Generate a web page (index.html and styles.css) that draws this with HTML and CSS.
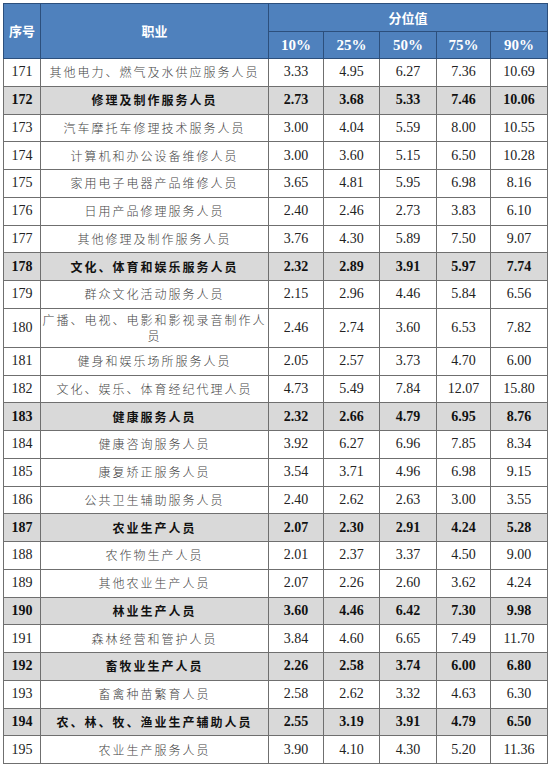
FILE: index.html
```html
<!DOCTYPE html>
<html lang="zh">
<head>
<meta charset="utf-8">
<link rel="stylesheet" href="styles.css">
</head>
<body>
<table class="tbl">
<colgroup>
<col class="c-no"><col class="c-job"><col class="c-a"><col class="c-b"><col class="c-c"><col class="c-d"><col class="c-e">
</colgroup>
<thead>
<tr class="h1"><th rowspan="2" class="hz">序号</th><th rowspan="2" class="hz">职业</th><th colspan="5" class="hz">分位值</th></tr>
<tr class="h2"><th>10%</th><th>25%</th><th>50%</th><th class="dk">75%</th><th>90%</th></tr>
</thead>
<tbody>
<tr><td>171</td><td class="job">其他电力、燃气及水供应服务人员</td><td>3.33</td><td>4.95</td><td>6.27</td><td class="dk">7.36</td><td>10.69</td></tr>
<tr class="cat"><td>172</td><td class="job">修理及制作服务人员</td><td>2.73</td><td>3.68</td><td>5.33</td><td class="dk">7.46</td><td>10.06</td></tr>
<tr><td>173</td><td class="job">汽车摩托车修理技术服务人员</td><td>3.00</td><td>4.04</td><td>5.59</td><td class="dk">8.00</td><td>10.55</td></tr>
<tr><td>174</td><td class="job">计算机和办公设备维修人员</td><td>3.00</td><td>3.60</td><td>5.15</td><td class="dk">6.50</td><td>10.28</td></tr>
<tr><td>175</td><td class="job">家用电子电器产品维修人员</td><td>3.65</td><td>4.81</td><td>5.95</td><td class="dk">6.98</td><td>8.16</td></tr>
<tr><td>176</td><td class="job">日用产品修理服务人员</td><td>2.40</td><td>2.46</td><td>2.73</td><td class="dk">3.83</td><td>6.10</td></tr>
<tr><td>177</td><td class="job">其他修理及制作服务人员</td><td>3.76</td><td>4.30</td><td>5.89</td><td class="dk">7.50</td><td>9.07</td></tr>
<tr class="cat"><td>178</td><td class="job">文化、体育和娱乐服务人员</td><td>2.32</td><td>2.89</td><td>3.91</td><td class="dk">5.97</td><td>7.74</td></tr>
<tr><td>179</td><td class="job">群众文化活动服务人员</td><td>2.15</td><td>2.96</td><td>4.46</td><td class="dk">5.84</td><td>6.56</td></tr>
<tr class="tall"><td>180</td><td class="job">广播、电视、电影和影视录音制作人<br>员</td><td>2.46</td><td>2.74</td><td>3.60</td><td class="dk">6.53</td><td>7.82</td></tr>
<tr><td>181</td><td class="job">健身和娱乐场所服务人员</td><td>2.05</td><td>2.57</td><td>3.73</td><td class="dk">4.70</td><td>6.00</td></tr>
<tr><td>182</td><td class="job">文化、娱乐、体育经纪代理人员</td><td>4.73</td><td>5.49</td><td>7.84</td><td class="dk">12.07</td><td>15.80</td></tr>
<tr class="cat"><td>183</td><td class="job">健康服务人员</td><td>2.32</td><td>2.66</td><td>4.79</td><td class="dk">6.95</td><td>8.76</td></tr>
<tr><td>184</td><td class="job">健康咨询服务人员</td><td>3.92</td><td>6.27</td><td>6.96</td><td class="dk">7.85</td><td>8.34</td></tr>
<tr><td>185</td><td class="job">康复矫正服务人员</td><td>3.54</td><td>3.71</td><td>4.96</td><td class="dk">6.98</td><td>9.15</td></tr>
<tr><td>186</td><td class="job">公共卫生辅助服务人员</td><td>2.40</td><td>2.62</td><td>2.63</td><td class="dk">3.00</td><td>3.55</td></tr>
<tr class="cat"><td>187</td><td class="job">农业生产人员</td><td>2.07</td><td>2.30</td><td>2.91</td><td class="dk">4.24</td><td>5.28</td></tr>
<tr><td>188</td><td class="job">农作物生产人员</td><td>2.01</td><td>2.37</td><td>3.37</td><td class="dk">4.50</td><td>9.00</td></tr>
<tr><td>189</td><td class="job">其他农业生产人员</td><td>2.07</td><td>2.26</td><td>2.60</td><td class="dk">3.62</td><td>4.24</td></tr>
<tr class="cat"><td>190</td><td class="job">林业生产人员</td><td>3.60</td><td>4.46</td><td>6.42</td><td class="dk">7.30</td><td>9.98</td></tr>
<tr><td>191</td><td class="job">森林经营和管护人员</td><td>3.84</td><td>4.60</td><td>6.65</td><td class="dk">7.49</td><td>11.70</td></tr>
<tr class="cat"><td>192</td><td class="job">畜牧业生产人员</td><td>2.26</td><td>2.58</td><td>3.74</td><td class="dk">6.00</td><td>6.80</td></tr>
<tr><td>193</td><td class="job">畜禽种苗繁育人员</td><td>2.58</td><td>2.62</td><td>3.32</td><td class="dk">4.63</td><td>6.30</td></tr>
<tr class="cat"><td>194</td><td class="job">农、林、牧、渔业生产辅助人员</td><td>2.55</td><td>3.19</td><td>3.91</td><td class="dk">4.79</td><td>6.50</td></tr>
<tr><td>195</td><td class="job">农业生产服务人员</td><td>3.90</td><td>4.10</td><td>4.30</td><td class="dk">5.20</td><td>11.36</td></tr>
</tbody>
</table>
</body>
</html>
```
FILE: styles.css
```css
html, body {
  margin: 0;
  padding: 0;
  background: #ffffff;
}
body {
  padding: 3px 0 0 3px;
}
.tbl {
  border-collapse: collapse;
  table-layout: fixed;
  width: 545px;
  font-family: "Liberation Serif", "Noto Sans CJK SC", serif;
  font-size: 14px;
  color: #222;
}
.c-no { width: 37px; }
.c-job { width: 228px; }
.c-a { width: 55px; }
.c-b { width: 56px; }
.c-c { width: 57px; }
.c-d { width: 54px; }
.c-e { width: 57px; }

.tbl th, .tbl td {
  border: 1px solid #6f6f6f;
  padding: 0;
  text-align: center;
  vertical-align: middle;
  line-height: 16px;
}
.tbl th {
  background: #4f81bd;
  color: #ffffff;
  font-weight: bold;
  border-color: #2c4f7c;
}
.tbl .hz {
  font-family: "Noto Sans CJK SC", sans-serif;
  font-size: 13px;
}
.h1 th { height: 27px; }
.h2 th { height: 26px; font-size: 15px; }

.tbl td { height: 26.75px; }
.tbl tr.tall td { height: 38px; }
.tbl td.dk { border-left-color: #222; }
.tbl th.dk { border-left-color: #1f3a5f; }

.job {
  font-family: "Noto Sans CJK SC", sans-serif;
  font-size: 12px;
  letter-spacing: 2px;
  color: #444;
  font-weight: 300;
}
.cat td {
  background: #d9d9d9;
  font-weight: bold;
  color: #111;
}
.cat td.job {
  font-weight: bold;
  color: #111;
}
```
